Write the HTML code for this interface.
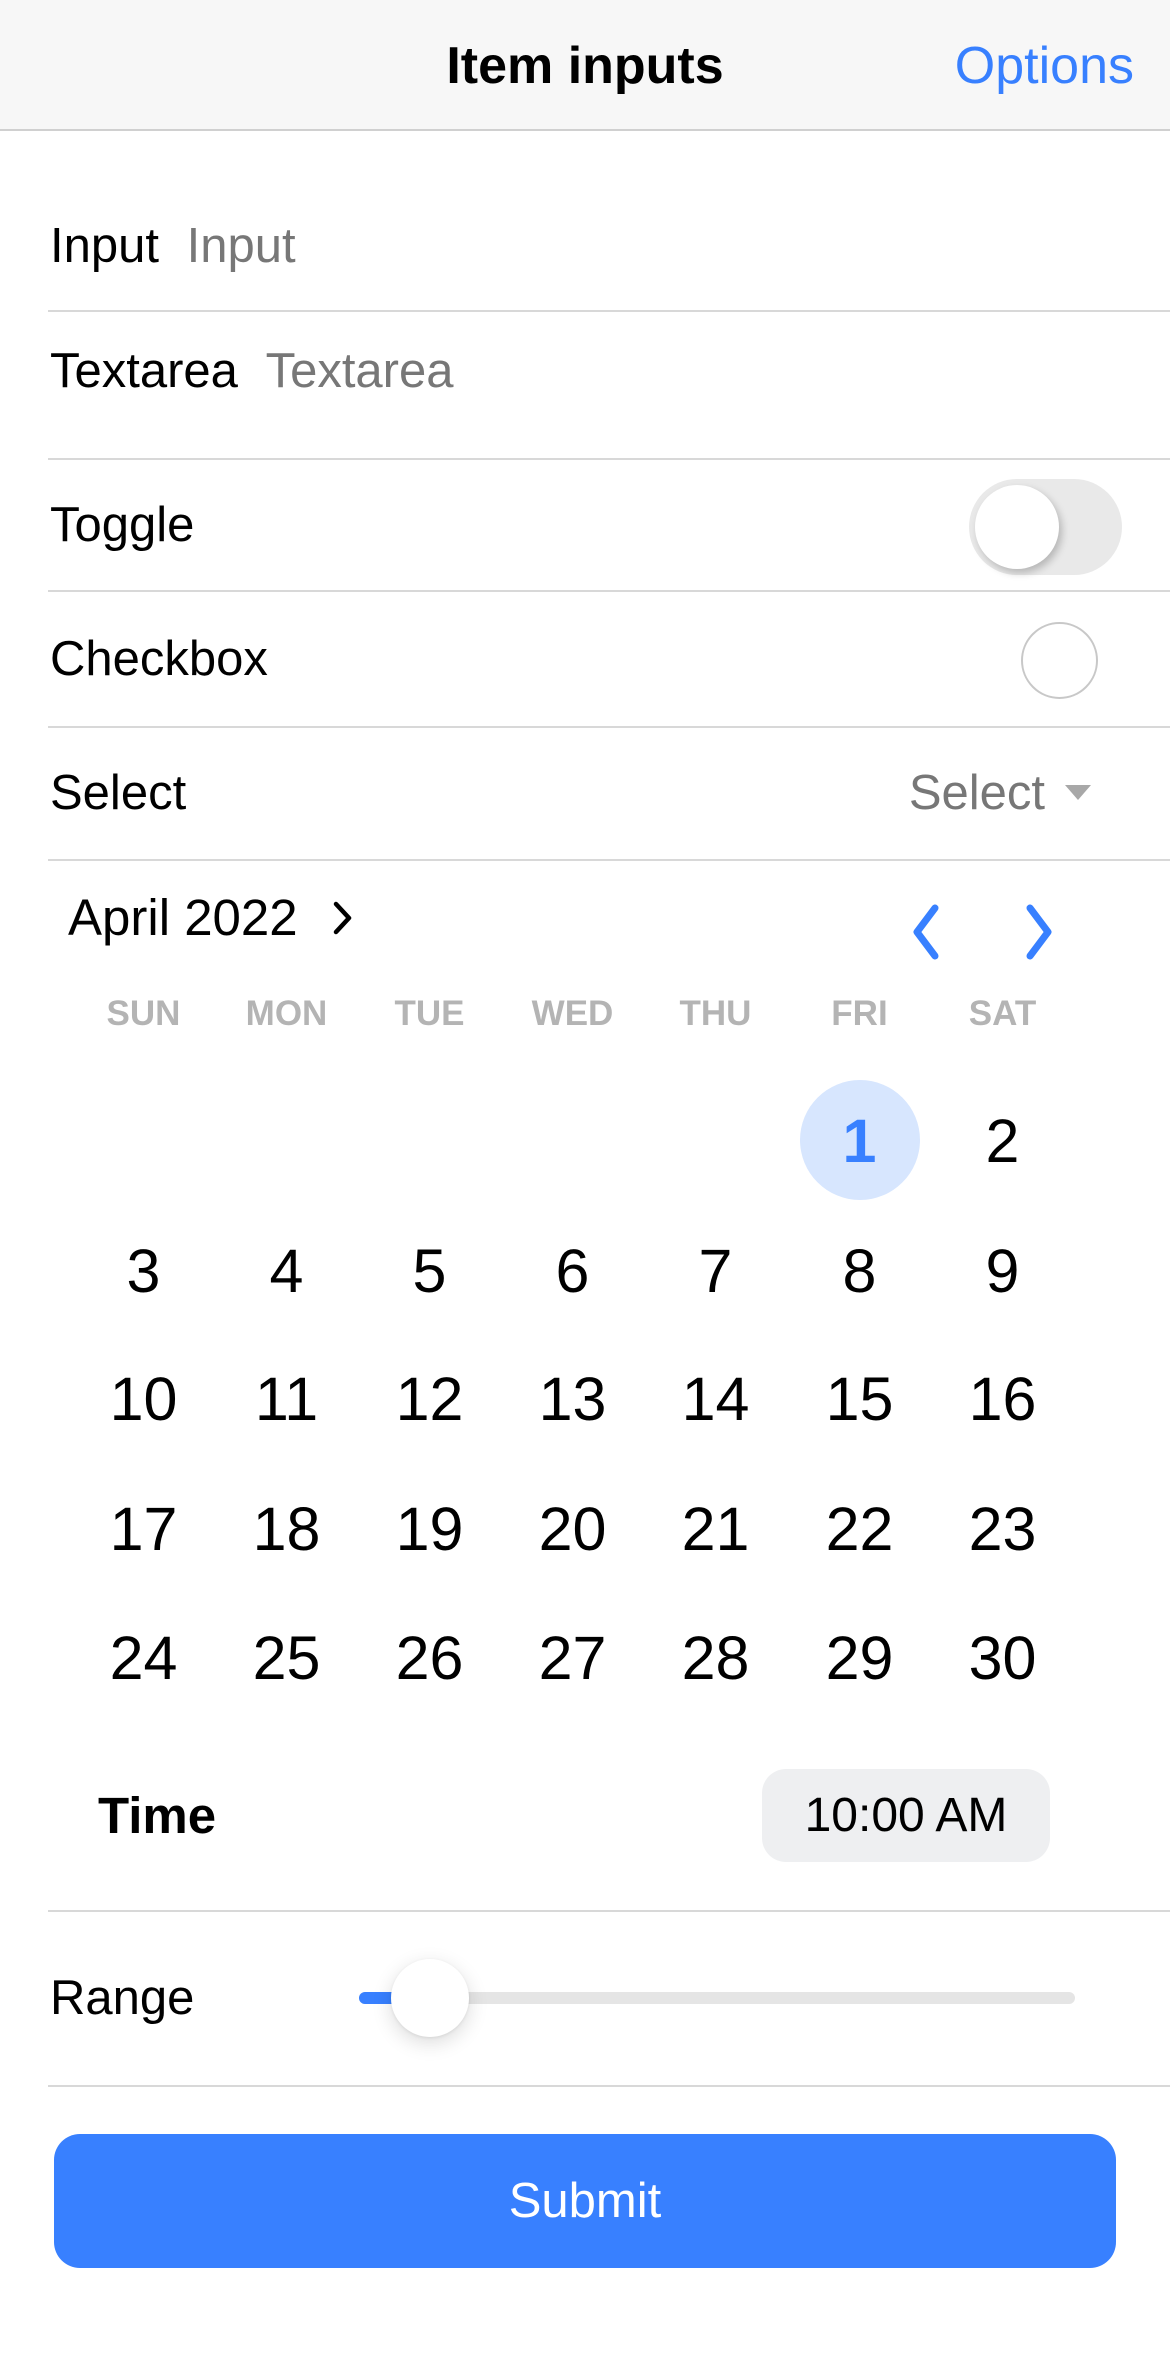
<!DOCTYPE html>
<html><head><meta charset="utf-8"><style>
*{margin:0;padding:0;box-sizing:border-box}
body{width:1170px;height:2364px;background:#fff;position:relative;overflow:hidden;font-family:"Liberation Sans",sans-serif;color:#000}
.a{position:absolute;white-space:nowrap}
.hd{position:absolute;left:0;top:0;width:1170px;height:131px;background:#f7f7f7;border-bottom:2px solid #d0d0d0}
.ln{position:absolute;left:48px;right:0;height:2px;background:#d8d8d8}
.lb{font-size:49px;line-height:60px}
.ph{color:#777}
.wd{position:absolute;top:994px;width:143px;text-align:center;font-size:35px;font-weight:bold;color:#b4b4b4}
.d{position:absolute;width:143px;text-align:center;font-size:61px;line-height:70px}
</style></head><body>
<div class="hd"></div>
<div class="a" style="left:0;width:1170px;text-align:center;top:36px;font-size:52px;font-weight:bold;line-height:60px">Item inputs</div>
<div class="a" style="right:36px;top:36px;font-size:52px;line-height:60px;color:#3880ff">Options</div>

<div class="a lb" style="left:50px;top:216px">Input <span class="ph" style="margin-left:14px">Input</span></div>
<div class="ln" style="top:310px"></div>
<div class="a lb" style="left:50px;top:341px">Textarea <span class="ph" style="margin-left:14px">Textarea</span></div>
<div class="ln" style="top:458px"></div>
<div class="a lb" style="left:50px;top:495px">Toggle</div>
<div class="a" style="left:969px;top:479px;width:153px;height:96px;border-radius:48px;background:#e9e9e9"></div>
<div class="a" style="left:975px;top:485px;width:84px;height:84px;border-radius:50%;background:#fff;box-shadow:3px 4px 8px rgba(0,0,0,.22)"></div>
<div class="ln" style="top:590px"></div>
<div class="a lb" style="left:50px;top:629px">Checkbox</div>
<div class="a" style="left:1021px;top:622px;width:77px;height:77px;border-radius:50%;border:2px solid #c8c8c8"></div>
<div class="ln" style="top:726px"></div>
<div class="a lb" style="left:50px;top:763px">Select</div>
<div class="a lb ph" style="right:125px;top:763px">Select</div>
<div class="a" style="left:1065px;top:785px;width:0;height:0;border-left:13px solid transparent;border-right:13px solid transparent;border-top:15px solid #a8a8a8"></div>
<div class="ln" style="top:859px"></div>

<div class="a" style="left:68px;top:889px;font-size:51px;line-height:58px">April 2022</div>
<svg class="a" style="left:332px;top:900px" width="24" height="36" viewBox="0 0 24 36"><path d="M4 4 L17 18 L4 32" fill="none" stroke="#000" stroke-width="4.5" stroke-linecap="round" stroke-linejoin="round"/></svg>
<svg class="a" style="left:905px;top:902px" width="40" height="60" viewBox="0 0 40 60"><path d="M30 6 L12 30 L30 54" fill="none" stroke="#3880ff" stroke-width="7" stroke-linecap="round" stroke-linejoin="round"/></svg>
<svg class="a" style="left:1020px;top:902px" width="40" height="60" viewBox="0 0 40 60"><path d="M10 6 L28 30 L10 54" fill="none" stroke="#3880ff" stroke-width="7" stroke-linecap="round" stroke-linejoin="round"/></svg>

<div class="wd" style="left:72px">SUN</div>
<div class="wd" style="left:215px">MON</div>
<div class="wd" style="left:358px">TUE</div>
<div class="wd" style="left:501px">WED</div>
<div class="wd" style="left:644px">THU</div>
<div class="wd" style="left:788px">FRI</div>
<div class="wd" style="left:931px">SAT</div>

<div class="a" style="left:800px;top:1080px;width:120px;height:120px;border-radius:50%;background:#d7e6fe"></div>
<div class="d" style="left:788px;top:1106px;color:#3880ff;font-weight:bold">1</div>
<div class="d" style="left:931px;top:1106px">2</div>

<div class="d" style="left:72px;top:1236px">3</div><div class="d" style="left:215px;top:1236px">4</div><div class="d" style="left:358px;top:1236px">5</div><div class="d" style="left:501px;top:1236px">6</div><div class="d" style="left:644px;top:1236px">7</div><div class="d" style="left:788px;top:1236px">8</div><div class="d" style="left:931px;top:1236px">9</div>
<div class="d" style="left:72px;top:1364px">10</div><div class="d" style="left:215px;top:1364px">11</div><div class="d" style="left:358px;top:1364px">12</div><div class="d" style="left:501px;top:1364px">13</div><div class="d" style="left:644px;top:1364px">14</div><div class="d" style="left:788px;top:1364px">15</div><div class="d" style="left:931px;top:1364px">16</div>
<div class="d" style="left:72px;top:1494px">17</div><div class="d" style="left:215px;top:1494px">18</div><div class="d" style="left:358px;top:1494px">19</div><div class="d" style="left:501px;top:1494px">20</div><div class="d" style="left:644px;top:1494px">21</div><div class="d" style="left:788px;top:1494px">22</div><div class="d" style="left:931px;top:1494px">23</div>
<div class="d" style="left:72px;top:1623px">24</div><div class="d" style="left:215px;top:1623px">25</div><div class="d" style="left:358px;top:1623px">26</div><div class="d" style="left:501px;top:1623px">27</div><div class="d" style="left:644px;top:1623px">28</div><div class="d" style="left:788px;top:1623px">29</div><div class="d" style="left:931px;top:1623px">30</div>

<div class="a" style="left:98px;top:1786px;font-size:51px;font-weight:bold;line-height:60px">Time</div>
<div class="a" style="left:762px;top:1769px;width:288px;height:93px;border-radius:24px;background:#eeeff1;font-size:48px;line-height:93px;text-align:center">10:00 AM</div>
<div class="ln" style="top:1910px"></div>

<div class="a lb" style="left:50px;top:1968px">Range</div>
<div class="a" style="left:359px;top:1992px;width:716px;height:12px;border-radius:6px;background:#e5e5e5"></div>
<div class="a" style="left:359px;top:1992px;width:70px;height:12px;border-radius:6px;background:#3880ff"></div>
<div class="a" style="left:391px;top:1959px;width:78px;height:78px;border-radius:50%;background:#fff;box-shadow:0 6px 20px rgba(0,0,0,.14),0 1px 3px rgba(0,0,0,.08)"></div>
<div class="ln" style="top:2085px"></div>

<div class="a" style="left:54px;top:2134px;width:1062px;height:134px;border-radius:26px;background:#3880ff;color:#fff;font-size:49px;line-height:134px;text-align:center">Submit</div>
</body></html>
